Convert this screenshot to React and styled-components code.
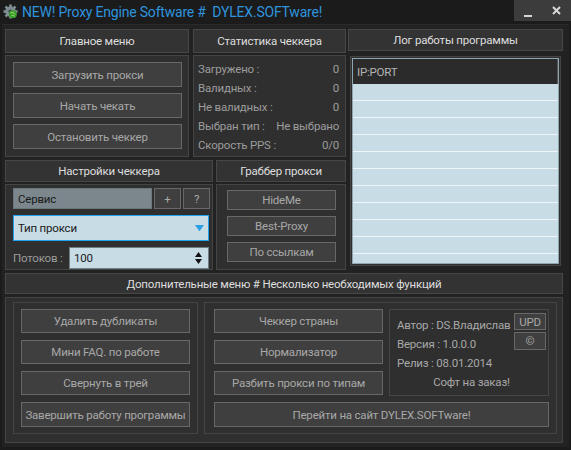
import React from 'react';
import styled, { createGlobalStyle } from 'styled-components';

const GlobalStyle = createGlobalStyle`
  body {
    margin: 0;
    background: #1b1b1b;
    font-family: Roboto, "Noto Sans", sans-serif;
    font-size: 11.5px;
    letter-spacing: -0.2px;
  }
  * { box-sizing: border-box; }
`;

const Window = styled.div`
  width: 571px;
  height: 450px;
  background: #1b1b1b;
  display: flex;
  flex-direction: column;
  overflow: hidden;
`;

const TitleBar = styled.div`
  height: 24px;
  display: flex;
  align-items: flex-start;
`;

const Title = styled.div`
  margin: 3px 0 0 4px;
  color: #2e94de;
  font-size: 14px;
  line-height: 19px;
  white-space: pre;
`;

const Controls = styled.div`
  margin-left: auto;
  width: 57px;
  height: 21px;
  background: #3c3c3c;
  display: flex;
  align-items: center;
  justify-content: space-around;
`;

const Frame = styled.div`
  margin: 0 2px 3px;
  padding: 4px 6px 3px 3px;
  background: #222;
  border-top: 1px solid #2a2a2a;
  flex: 1;
`;

const Top = styled.div`
  display: grid;
  grid-template-columns: 341px 215px;
  column-gap: 2px;
`;

const LeftCol = styled.div`
  display: flex;
  flex-direction: column;
  gap: 3px;
`;

const Row = styled.div`
  display: flex;
  gap: ${p => p.$gap}px;
`;

const Panel = styled.div`
  width: ${p => p.$w}px;
  display: flex;
  flex-direction: column;
  gap: ${p => p.$gap || 2}px;
`;

const Header = styled.div`
  height: ${p => p.$h}px;
  background: #333;
  border: 1px solid #474747;
  color: #dedede;
  display: flex;
  align-items: center;
  justify-content: center;
`;

const Body = styled.div`
  height: ${p => p.$h}px;
  background: #2f2f2f;
  border: 1px solid #444;
  padding: ${p => p.$pad};
  display: flex;
  flex-direction: column;
  gap: ${p => p.$gap || 0}px;
`;

const Button = styled.div`
  height: ${p => p.$h || 24}px;
  width: ${p => (p.$w ? p.$w + 'px' : 'auto')};
  background: #3f3f3f;
  border: 1px solid #686868;
  color: #a8a8a8;
  display: flex;
  align-items: center;
  justify-content: center;
  white-space: nowrap;
`;

const StatRow = styled.div`
  height: 19px;
  display: flex;
  align-items: center;
  justify-content: space-between;
  color: #9c9c9c;
  white-space: nowrap;
`;

const Field = styled.div`
  height: ${p => p.$h}px;
  width: ${p => (p.$w ? p.$w + 'px' : 'auto')};
  flex: ${p => (p.$w ? 'none' : 1)};
  background: ${p => p.$bg};
  border: 1px solid ${p => p.$border};
  color: #1a1a1a;
  padding: 0 4px;
  display: flex;
  align-items: center;
  justify-content: space-between;
`;

const Label = styled.div`
  color: #9c9c9c;
  width: 56px;
  white-space: nowrap;
`;

const Spin = styled.div`
  display: flex;
  flex-direction: column;
  gap: 2px;
  margin-right: 2px;
`;

const Log = styled.div`
  height: 210px;
  margin: 0 2px;
  border: 1px solid #444;
  background: #2f2f2f;
  padding: 1px;
`;

const List = styled.div`
  height: 100%;
  background: #c8dce6;
  border: 1px solid #8ea6b1;
  overflow: hidden;
`;

const ListHead = styled.div`
  height: 25px;
  background: #2b2b2b;
  border-right: 1px solid #555;
  color: #b4b4b4;
  padding-left: 4px;
  display: flex;
  align-items: center;
`;

const ListRow = styled.div`
  height: 17px;
  border-bottom: 1px solid #eef5f8;
`;

const Bottom = styled.div`
  margin-top: 3px;
  display: flex;
  flex-direction: column;
  gap: 3px;
`;

const BottomBody = styled.div`
  height: 146px;
  background: #2f2f2f;
  border: 1px solid #444;
  padding: 4px 5px 0 7px;
  display: flex;
  gap: 6px;
`;

const Group = styled.div`
  width: ${p => p.$w}px;
  height: 132px;
  border: 1px solid #444;
  padding: ${p => p.$pad};
`;

const ButtonStack = styled.div`
  display: flex;
  flex-direction: column;
  gap: 7px;
`;

const ToolGrid = styled.div`
  display: grid;
  grid-template-columns: 169px 160px;
  grid-template-rows: 24px 24px 24px 25px;
  column-gap: 6px;
  row-gap: 7px;
`;

const Info = styled.div`
  grid-column: 2;
  grid-row: 1 / span 3;
  height: 87px;
  border: 1px solid #474747;
  padding: 2px 2px 0 7px;
  display: flex;
  flex-direction: column;
  color: #a8a8a8;
`;

const InfoTop = styled.div`
  display: flex;
  justify-content: space-between;
`;

const InfoLines = styled.div`
  padding-top: 3px;
  display: flex;
  flex-direction: column;
`;

const InfoLine = styled.div`
  height: 19px;
  display: flex;
  align-items: center;
  white-space: nowrap;
  justify-content: ${p => (p.$center ? 'center' : 'flex-start')};
`;

const SmallButtons = styled.div`
  display: flex;
  flex-direction: column;
  gap: 2px;
  padding-top: 1px;
`;

const Wide = styled(Button)`
  grid-column: 1 / span 2;
`;

const AppIcon = () => (
  <svg width="15" height="15" viewBox="0 0 16 16" style={{ margin: '4px 0 0 3px' }}>
    <g fill="#7f8d93">
      {[0, 45, 90, 135, 180, 225, 270, 315].map(a => (
        <rect key={a} x="6.6" y="0.5" width="2.8" height="3.5" transform={`rotate(${a} 8 8)`} />
      ))}
      <circle cx="8" cy="8" r="5.6" />
    </g>
    <circle cx="8" cy="8" r="2.2" fill="#3a4448" />
    <circle cx="10.5" cy="10.8" r="4.2" fill="#3a9d2a" />
    <path d="M8 9.5 q2-1 3 0 t2 1.5 M9 12.5 q1.5-1 3 .5" stroke="#a6e07a" strokeWidth="1" fill="none" />
  </svg>
);

const TriDown = ({ color, size = 8 }) => (
  <svg width={size} height={size * 0.7} viewBox="0 0 10 7">
    <path d="M0 0 H10 L5 7 Z" fill={color} />
  </svg>
);

const TriUp = ({ color, size = 8 }) => (
  <svg width={size} height={size * 0.7} viewBox="0 0 10 7">
    <path d="M0 7 H10 L5 0 Z" fill={color} />
  </svg>
);

const stats = [
  ['Загружено :', '0'],
  ['Валидных :', '0'],
  ['Не валидных :', '0'],
  ['Выбран тип :', 'Не выбрано'],
  ['Скорость PPS :', '0/0'],
];

export default function App() {
  return (
    <Window>
      <GlobalStyle />
      <TitleBar>
        <AppIcon />
        <Title>{'NEW! Proxy Engine Software #  DYLEX.SOFTware!'}</Title>
        <Controls>
          <svg width="8" height="14" viewBox="0 0 8 14">
            <rect x="0" y="11" width="8" height="2" fill="#d8d8d8" />
          </svg>
          <svg width="9" height="9" viewBox="0 0 9 9">
            <path d="M1 1 L8 8 M8 1 L1 8" stroke="#d8d8d8" strokeWidth="2" />
          </svg>
        </Controls>
      </TitleBar>
      <Frame>
        <Top>
          <LeftCol>
            <Row $gap={4}>
              <Panel $w={184}>
                <Header $h={24}>Главное меню</Header>
                <Body $h={102} $pad="6px 6px 0 7px" $gap={6}>
                  <Button $h={25}>Загрузить прокси</Button>
                  <Button $h={25}>Начать чекать</Button>
                  <Button $h={25}>Остановить чеккер</Button>
                </Body>
              </Panel>
              <Panel $w={153}>
                <Header $h={24}>Статистика чеккера</Header>
                <Body $h={102} $pad="3px 6px 0 4px">
                  {stats.map(([k, v]) => (
                    <StatRow key={k}>
                      <span>{k}</span>
                      <span>{v}</span>
                    </StatRow>
                  ))}
                </Body>
              </Panel>
            </Row>
            <Row $gap={3}>
              <Panel $w={208}>
                <Header $h={22}>Настройки чеккера</Header>
                <Body $h={86} $pad="3px 2px 0 7px" $gap={6}>
                  <Row $gap={2}>
                    <Field $h={21} $bg="#7b878d" $border="#6c777c">Сервис</Field>
                    <Button $h={21} $w={27}>+</Button>
                    <Button $h={21} $w={27}>?</Button>
                  </Row>
                  <Field $h={22} $bg="#c8dce6" $border="#1fa3f0" style={{ marginRight: 1 }}>
                    Тип прокси
                    <TriDown color="#2a9fe6" size={9} />
                  </Field>
                  <Row $gap={0} style={{ alignItems: 'center', marginRight: 1 }}>
                    <Label>Потоков :</Label>
                    <Field $h={22} $bg="#c8dce6" $border="#6f7d84">
                      100
                      <Spin>
                        <TriUp color="#111" size={7} />
                        <TriDown color="#111" size={7} />
                      </Spin>
                    </Field>
                  </Row>
                </Body>
              </Panel>
              <Panel $w={130}>
                <Header $h={22}>Граббер прокси</Header>
                <Body $h={86} $pad="5px 9px 0 10px" $gap={6}>
                  <Button $h={20}>HideMe</Button>
                  <Button $h={20}>Best-Proxy</Button>
                  <Button $h={20}>По ссылкам</Button>
                </Body>
              </Panel>
            </Row>
          </LeftCol>
          <Panel $w={215} $gap={5}>
            <Header $h={22}>Лог работы программы</Header>
            <Log>
              <List>
                <ListHead>IP:PORT</ListHead>
                {Array.from({ length: 11 }).map((_, i) => (
                  <ListRow key={i} />
                ))}
              </List>
            </Log>
          </Panel>
        </Top>
        <Bottom>
          <Header $h={21}>Дополнительные меню # Несколько необходимых функций</Header>
          <BottomBody>
            <Group $w={185} $pad="6px 7px 0 7px">
              <ButtonStack>
                <Button>Удалить дубликаты</Button>
                <Button>Мини FAQ. по работе</Button>
                <Button>Свернуть в трей</Button>
                <Button $h={25}>Завершить работу программы</Button>
              </ButtonStack>
            </Group>
            <Group $w={353} $pad="6px 7px 0 9px">
              <ToolGrid>
                <Button>Чеккер страны</Button>
                <Info>
                  <InfoTop>
                    <InfoLines>
                      <InfoLine>Автор : DS.Владислав</InfoLine>
                      <InfoLine>Версия : 1.0.0.0</InfoLine>
                      <InfoLine>Релиз : 08.01.2014</InfoLine>
                    </InfoLines>
                    <SmallButtons>
                      <Button $h={17} $w={32}>UPD</Button>
                      <Button $h={18} $w={32}>©</Button>
                    </SmallButtons>
                  </InfoTop>
                  <InfoLine $center>Софт на заказ!</InfoLine>
                </Info>
                <Button style={{ gridRow: 2 }}>Нормализатор</Button>
                <Button style={{ gridRow: 3 }}>Разбить прокси по типам</Button>
                <Wide $h={25}>Перейти на сайт DYLEX.SOFTware!</Wide>
              </ToolGrid>
            </Group>
          </BottomBody>
        </Bottom>
      </Frame>
    </Window>
  );
}
